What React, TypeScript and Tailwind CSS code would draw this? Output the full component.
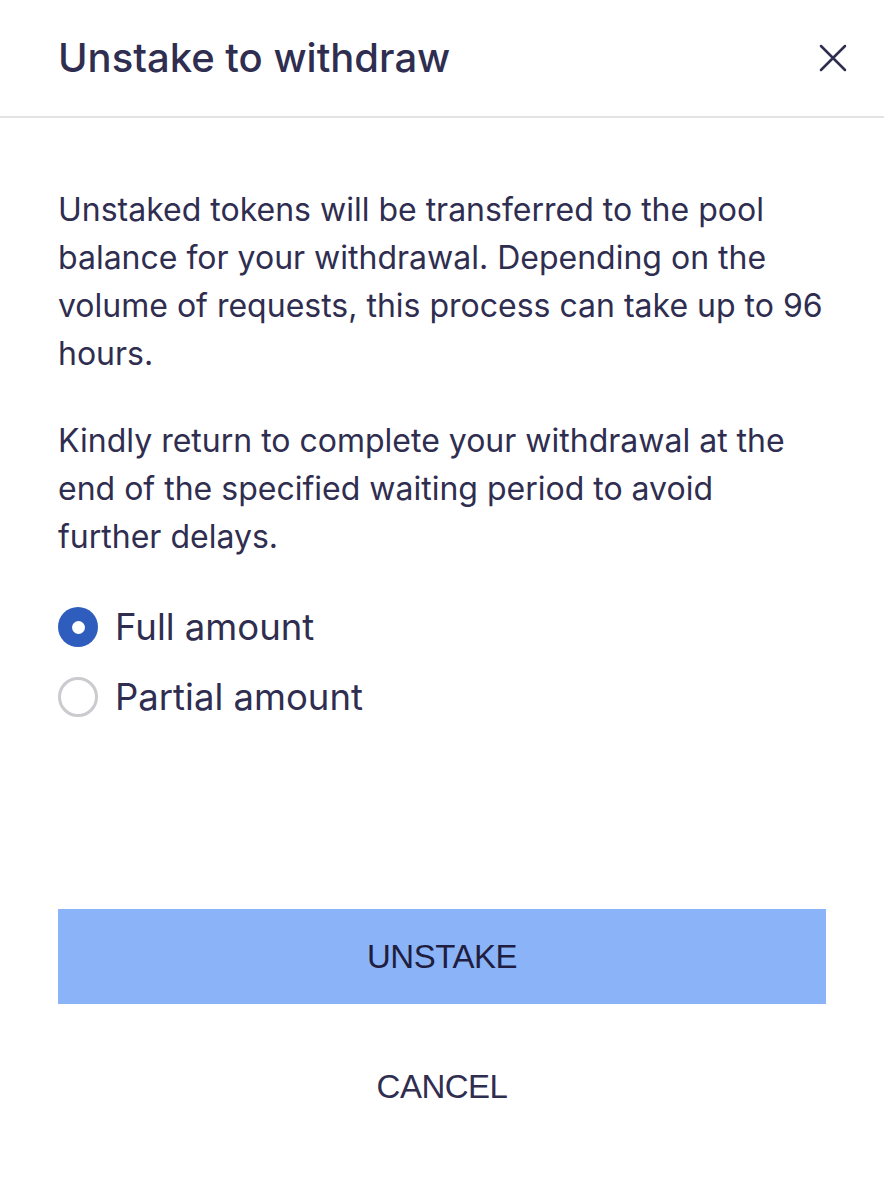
import { useState } from "react";

export default function App() {
  const [choice, setChoice] = useState<"full" | "partial">("full");

  return (
    <div className="min-h-screen w-full bg-white text-[#2f2e50] font-['Inter',sans-serif]">
      {/* Header */}
      <div className="flex h-[118px] items-center justify-between border-b-2 border-[#e3e3e6] pl-[58px] pr-[27px]">
        <h1 className="text-[40px] font-medium text-[#2f2e50]">
          Unstake to withdraw
        </h1>
        <button className="flex h-[48px] w-[48px] items-center justify-center">
          <svg width="32" height="32" viewBox="0 0 24 24" fill="none">
            <path
              d="M3 3L21 21M21 3L3 21"
              stroke="#2f2e50"
              strokeWidth="1.9"
              strokeLinecap="round"
            />
          </svg>
        </button>
      </div>

      {/* Body */}
      <div className="px-[58px] pt-[68px]">
        <p className="whitespace-nowrap text-[32px] leading-[48px]">
          Unstaked tokens will be transferred to the pool
          <br />
          balance for your withdrawal. Depending on the
          <br />
          volume of requests, this process can take up to 96
          <br />
          hours.
        </p>
        <p className="mt-[39px] whitespace-nowrap text-[32px] leading-[48px]">
          Kindly return to complete your withdrawal at the
          <br />
          end of the specified waiting period to avoid
          <br />
          further delays.
        </p>

        <div className="mt-[42px] flex flex-col gap-[22px]">
          {[
            { id: "full" as const, label: "Full amount" },
            { id: "partial" as const, label: "Partial amount" },
          ].map((opt) => (
            <label
              key={opt.id}
              className="flex h-[48px] cursor-pointer items-center gap-[17px]"
              onClick={() => setChoice(opt.id)}
            >
              {choice === opt.id ? (
                <span className="flex h-[40px] w-[40px] items-center justify-center rounded-full bg-[#2f5dbd]">
                  <span className="h-[13px] w-[13px] rounded-full bg-white" />
                </span>
              ) : (
                <span className="h-[40px] w-[40px] rounded-full border-[3px] border-[#cacacf]" />
              )}
              <span className="text-[36.5px]">{opt.label}</span>
            </label>
          ))}
        </div>

        <button className="mt-[188px] flex h-[95px] w-full items-center justify-center bg-[#8bb4f8] font-['Liberation_Sans',sans-serif] text-[33px] tracking-[-0.5px] text-[#1f1d40]">
          UNSTAKE
        </button>
        <button className="mt-[37px] flex h-[92px] w-full items-center justify-center font-['Liberation_Sans',sans-serif] text-[33px] tracking-[-0.5px] text-[#2f2e50]">
          CANCEL
        </button>
      </div>
    </div>
  );
}
